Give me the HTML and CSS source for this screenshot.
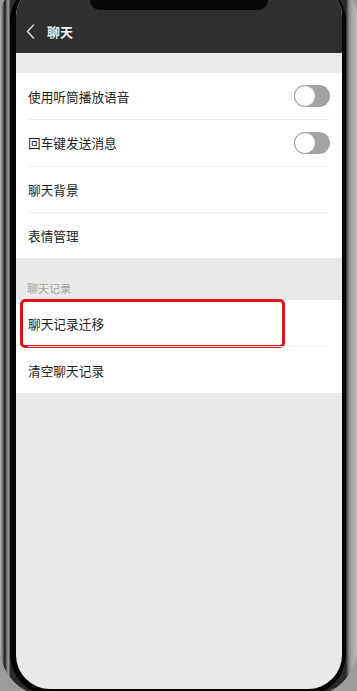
FILE: index.html
```html
<!DOCTYPE html>
<html lang="zh-CN">
<head>
<meta charset="utf-8">
<title>聊天</title>
<link rel="stylesheet" href="styles.css">
</head>
<body>
<div class="phone">
  <div class="bezel">
    <div class="inner">
      <div class="screen">
        <header class="nav">
          <svg class="back" width="9" height="15" viewBox="0 0 9 15"><path d="M7.5 1 L1.5 7.5 L7.5 14" fill="none" stroke="#d8d8d8" stroke-width="1.6" stroke-linecap="round" stroke-linejoin="round"/></svg>
          <span class="title">聊天</span>
        </header>
        <div class="gap-top"></div>
        <ul class="list">
          <li class="row"><span>使用听筒播放语音</span><span class="toggle"><span class="knob"></span></span></li>
          <li class="row"><span>回车键发送消息</span><span class="toggle"><span class="knob"></span></span></li>
          <li class="row"><span>聊天背景</span></li>
          <li class="row"><span>表情管理</span></li>
        </ul>
        <div class="section-label">聊天记录</div>
        <ul class="list">
          <li class="row marked"><span>聊天记录迁移</span><span class="highlight"></span></li>
          <li class="row"><span>清空聊天记录</span></li>
        </ul>
      </div>
    </div>
  </div>
  <div class="notch"></div>
</div>
</body>
</html>
```
FILE: styles.css
```css
* { box-sizing: border-box; }
html, body { margin: 0; padding: 0; }
body {
  font-family: "Noto Sans CJK SC", "Noto Sans", sans-serif;
  background: #9c9c9c;
}
.phone {
  position: relative;
  width: 357px;
  height: 691px;
  overflow: hidden;
  background: #9c9c9c;
}
.bezel {
  margin-top: -14px;
  height: 710px;
  border-radius: 30px 30px 48px 48px;
  background: linear-gradient(to right,
    #b4b4b4 0, #8a8a8a 2px, #3a3a3a 4px, #1a1a1a 5px, #7e7e7e 7px, #9a9a9a 9px, #2a2a2a 10px,
    #2a2a2a calc(100% - 11px), #4a4a4a calc(100% - 10px), #888 calc(100% - 8px), #a6a6a6 calc(100% - 5px), #bdbdbd 100%);
  padding: 0 11px 0 10px;
}
.inner {
  height: 100%;
  background: #030303;
  border-radius: 34px 34px 42px 42px;
  padding: 0 4px 2px 6px;
}
.screen {
  height: 703px;
  background: #e8eae7;
  border-radius: 30px 30px 34px 34px;
  overflow: hidden;
  display: flex;
  flex-direction: column;
}
.nav {
  flex: none;
  height: 67px;
  padding: 23px 0 0 10px;
  background: #2f2f2f;
  display: flex;
  align-items: center;
  gap: 12px;
}
.back { flex: none; }
.title {
  color: #f2f2f2;
  font-size: 13px;
  font-weight: 700;
}
.gap-top { flex: none; height: 20px; background: #e9ebe8; }
.list {
  list-style: none;
  margin: 0;
  padding: 0 12px;
  background: #fff;
}
.row {
  position: relative;
  height: 46.3px;
  display: flex;
  align-items: center;
  justify-content: space-between;
  font-size: 12.7px;
  color: #1e1e1e;
  border-top: 1px solid #efefef;
}
.row:first-child { border-top: none; }
.toggle {
  position: relative;
  width: 36px;
  height: 22px;
  border-radius: 11px;
  background: #a3a3a3;
}
.knob {
  position: absolute;
  left: 0;
  top: 0;
  width: 22px;
  height: 22px;
  border-radius: 50%;
  background: #fff;
  border: 1.5px solid #a3a3a3;
}
.section-label {
  flex: none;
  height: 42px;
  padding: 0 0 4px 11px;
  display: flex;
  align-items: flex-end;
  font-size: 11px;
  color: #a2a2a2;
}
.highlight {
  position: absolute;
  left: -8px;
  top: -1px;
  width: 265px;
  height: 49px;
  border: 3px solid #e0101c;
  border-radius: 5px;
}
.notch {
  position: absolute;
  left: 90px;
  top: 0;
  width: 178px;
  height: 10px;
  background: #060606;
  border-radius: 0 0 12px 12px;
}
```
